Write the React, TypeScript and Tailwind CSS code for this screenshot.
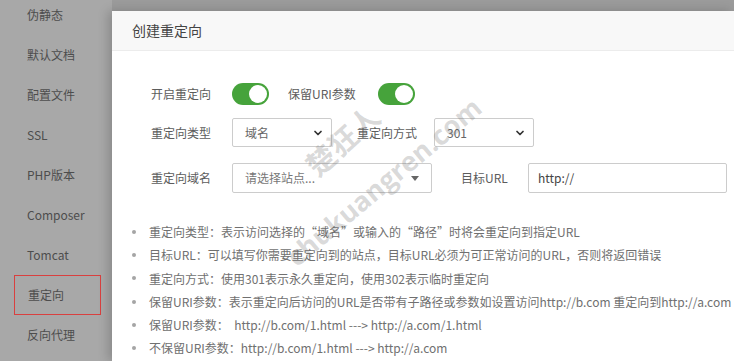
import { ChevronDown } from 'lucide-react';

const menu = ['伪静态', '默认文档', '配置文件', 'SSL', 'PHP版本', 'Composer', 'Tomcat', '重定向', '反向代理'];

const tips = [
  '重定向类型：表示访问选择的“域名”或输入的“路径”时将会重定向到指定URL',
  '目标URL：可以填写你需要重定向到的站点，目标URL必须为可正常访问的URL，否则将返回错误',
  '重定向方式：使用301表示永久重定向，使用302表示临时重定向',
  '保留URI参数：表示重定向后访问的URL是否带有子路径或参数如设置访问http://b.com 重定向到http://a.com',
  '保留URI参数：  http://b.com/1.html ---> http://a.com/1.html',
  '不保留URI参数：http://b.com/1.html ---> http://a.com',
];

function Toggle() {
  return (
    <div className="w-[37px] h-[22px] rounded-full bg-[#46a33b] flex items-center justify-end pr-[2px]">
      <div className="w-[18px] h-[18px] rounded-full bg-white" />
    </div>
  );
}

function Select({ value, width }: { value: string; width: string }) {
  return (
    <div className={`${width} h-[29px] border border-[#cccccc] rounded-[2px] bg-white flex items-center justify-between pl-[12px] pr-[7px]`}>
      <span className="text-[#666]">{value}</span>
      <ChevronDown size={12} strokeWidth={3.5} className="text-[#333]" />
    </div>
  );
}

export default function App() {
  return (
    <div
      className="relative w-[734px] h-[361px] overflow-hidden flex bg-[#a8a8a8] text-[12px]"
      style={{ fontFamily: '"Noto Sans CJK SC", "Noto Sans", sans-serif' }}
    >
      {/* sidebar under the overlay */}
      <div className="w-[112px] shrink-0 flex flex-col -mt-[5px]">
        {menu.map(item => (
          <div key={item} className="h-10 shrink-0 flex items-center pl-[14px]">
            <div
              className={`h-10 w-[87px] flex items-center pl-[13px] text-[#4d4d4d] ${
                item === '重定向' ? 'border border-[#d9403f] pl-[12px]' : ''
              }`}
            >
              {item}
            </div>
          </div>
        ))}
      </div>

      {/* modal */}
      <div className="flex-1 flex flex-col bg-[#9b9b9b] pt-[11px]">
        <div className="flex-1 bg-white flex flex-col shadow-[-4px_0_10px_rgba(0,0,0,0.18)]">
          <div className="h-[40px] shrink-0 bg-[#f8f8f8] border-b border-[#ececec] flex items-center pl-5 text-[14px] text-[#444]">
            创建重定向
          </div>

          <div className="pl-[39px] text-[#5c5c5c]">
            <div className="mt-[32px] h-[22px] flex items-center">
              <span className="w-[81px]">开启重定向</span>
              <Toggle />
              <span className="ml-[19px] w-[90px]">保留URI参数</span>
              <Toggle />
            </div>

            <div className="mt-[13px] h-[29px] flex items-center">
              <span className="w-[81px]">重定向类型</span>
              <Select value="域名" width="w-[100px]" />
              <span className="ml-[25px] w-[77px]">重定向方式</span>
              <Select value="301" width="w-[100px]" />
            </div>

            <div className="mt-[16px] h-[30px] flex items-center">
              <span className="w-[81px]">重定向域名</span>
              <div className="w-[200px] h-[30px] border border-[#cccccc] rounded-[2px] bg-white flex items-center justify-between pl-[12px] pr-[12px]">
                <span className="text-[#777]">请选择站点...</span>
                <span className="w-0 h-0 border-l-[4px] border-r-[4px] border-t-[5px] border-l-transparent border-r-transparent border-t-[#666]" />
              </div>
              <span className="ml-[29px] w-[67px]">目标URL</span>
              <div className="w-[199px] h-[30px] border border-[#cccccc] rounded-[2px] bg-white flex items-center pl-[9px] text-[#444]">
                http://
              </div>
            </div>
          </div>

          <ul className="mt-[27px] pl-5 text-[#707070] leading-[23.3px]">
            {tips.map((t, i) => (
              <li key={i} className="flex items-center whitespace-nowrap">
                <span className="w-[4px] h-[4px] rounded-full bg-[#a5a5a5] shrink-0" />
                <span className="ml-[13px] whitespace-pre">{t}</span>
              </li>
            ))}
          </ul>
        </div>
      </div>

      {/* watermark */}
      <div className="absolute left-[342px] top-[140px] -translate-x-1/2 -translate-y-1/2 rotate-[-42deg] text-[29px] font-bold text-[rgba(110,110,110,0.26)] whitespace-nowrap pointer-events-none">
        楚狂人
      </div>
      <div className="absolute left-[384px] top-[182px] -translate-x-1/2 -translate-y-1/2 rotate-[-40deg] text-[27px] font-bold text-[rgba(110,110,110,0.26)] whitespace-nowrap pointer-events-none" style={{ fontFamily: '"Open Sans", sans-serif' }}>
        chukuangren.com
      </div>
    </div>
  );
}
